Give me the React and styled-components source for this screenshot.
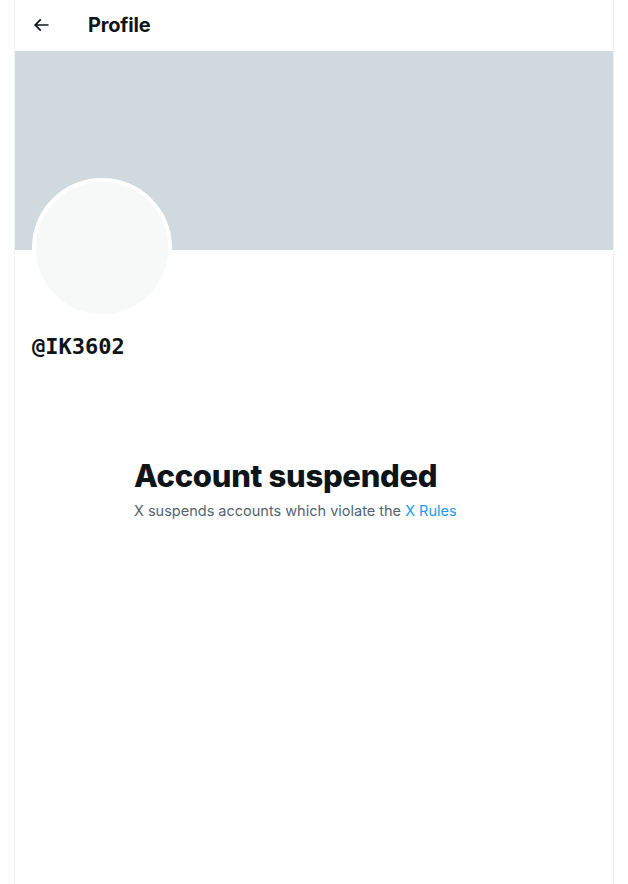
import styled, { createGlobalStyle } from "styled-components";

const GlobalStyle = createGlobalStyle`
  html, body {
    margin: 0;
    padding: 0;
    background: #ffffff;
  }
  body {
    font-family: "Inter", "Noto Sans", sans-serif;
    color: #0f1419;
  }
`

const Column = styled.main`
  width: 598px;
  margin-left: 14px;
  min-height: 884px;
  border-left: 1px solid #eff3f4;
  border-right: 1px solid #eff3f4;
`
const Header = styled.header`
  display: flex;
  align-items: center;
  height: 51px;
  box-sizing: border-box;
  padding: 0 16px 2px;
  gap: 29px;
`
const BackButton = styled.button`
  display: flex;
  align-items: center;
  justify-content: center;
  width: 36px;
  height: 36px;
  margin-left: -8px;
  border: none;
  border-radius: 50%;
  background: transparent;
  color: #0f1419;
  cursor: pointer;
`
const Title = styled.h2`
  margin: 0;
  font-size: 20px;
  font-weight: 700;
  letter-spacing: -0.2px;
`
const Banner = styled.div`
  height: 199px;
  background: #cfd9de;
`
const AvatarRow = styled.div`
  display: flex;
  padding: 0 16px;
  height: 68px;
`
const Avatar = styled.div`
  flex: none;
  width: 132px;
  height: 132px;
  margin-top: -72px;
  margin-left: 1px;
  border-radius: 50%;
  background: #f7f9f9;
  border: 4px solid #ffffff;
`
const Handle = styled.div`
  padding: 0 17px;
  margin-top: 17px;
  font-family: "DejaVu Sans Mono", monospace;
  font-weight: 700;
  font-size: 22px;
  line-height: 24px;
`
const Notice = styled.section`
  margin: 99px auto 0;
  width: 360px;
`
const NoticeTitle = styled.h1`
  margin: 0;
  font-size: 31px;
  line-height: 36px;
  font-weight: 800;
  letter-spacing: -0.3px;
`
const NoticeText = styled.p`
  margin: 7px 0 0;
  font-size: 14.5px;
  line-height: 20px;
  color: #536471;
`
const Link = styled.a`
  color: #1d9bf0;
  text-decoration: none;
`

const BackIcon = () => (
  <svg width="20" height="20" viewBox="0 0 24 24" fill="currentColor">
    <path d="M7.414 13l5.043 5.04-1.414 1.42L3.586 12l7.457-7.46 1.414 1.42L7.414 11H21v2H7.414z" />
  </svg>
)

const App = () => {
  return (
    <>
      <GlobalStyle />
      <Column>
        <Header>
          <BackButton aria-label="Back">
            <BackIcon />
          </BackButton>
          <Title>Profile</Title>
        </Header>
        <Banner />
        <AvatarRow>
          <Avatar />
        </AvatarRow>
        <Handle>@IK3602</Handle>
        <Notice>
          <NoticeTitle>Account suspended</NoticeTitle>
          <NoticeText>
            X suspends accounts which violate the <Link href="#">X Rules</Link>
          </NoticeText>
        </Notice>
      </Column>
    </>
  )
}

export default App
